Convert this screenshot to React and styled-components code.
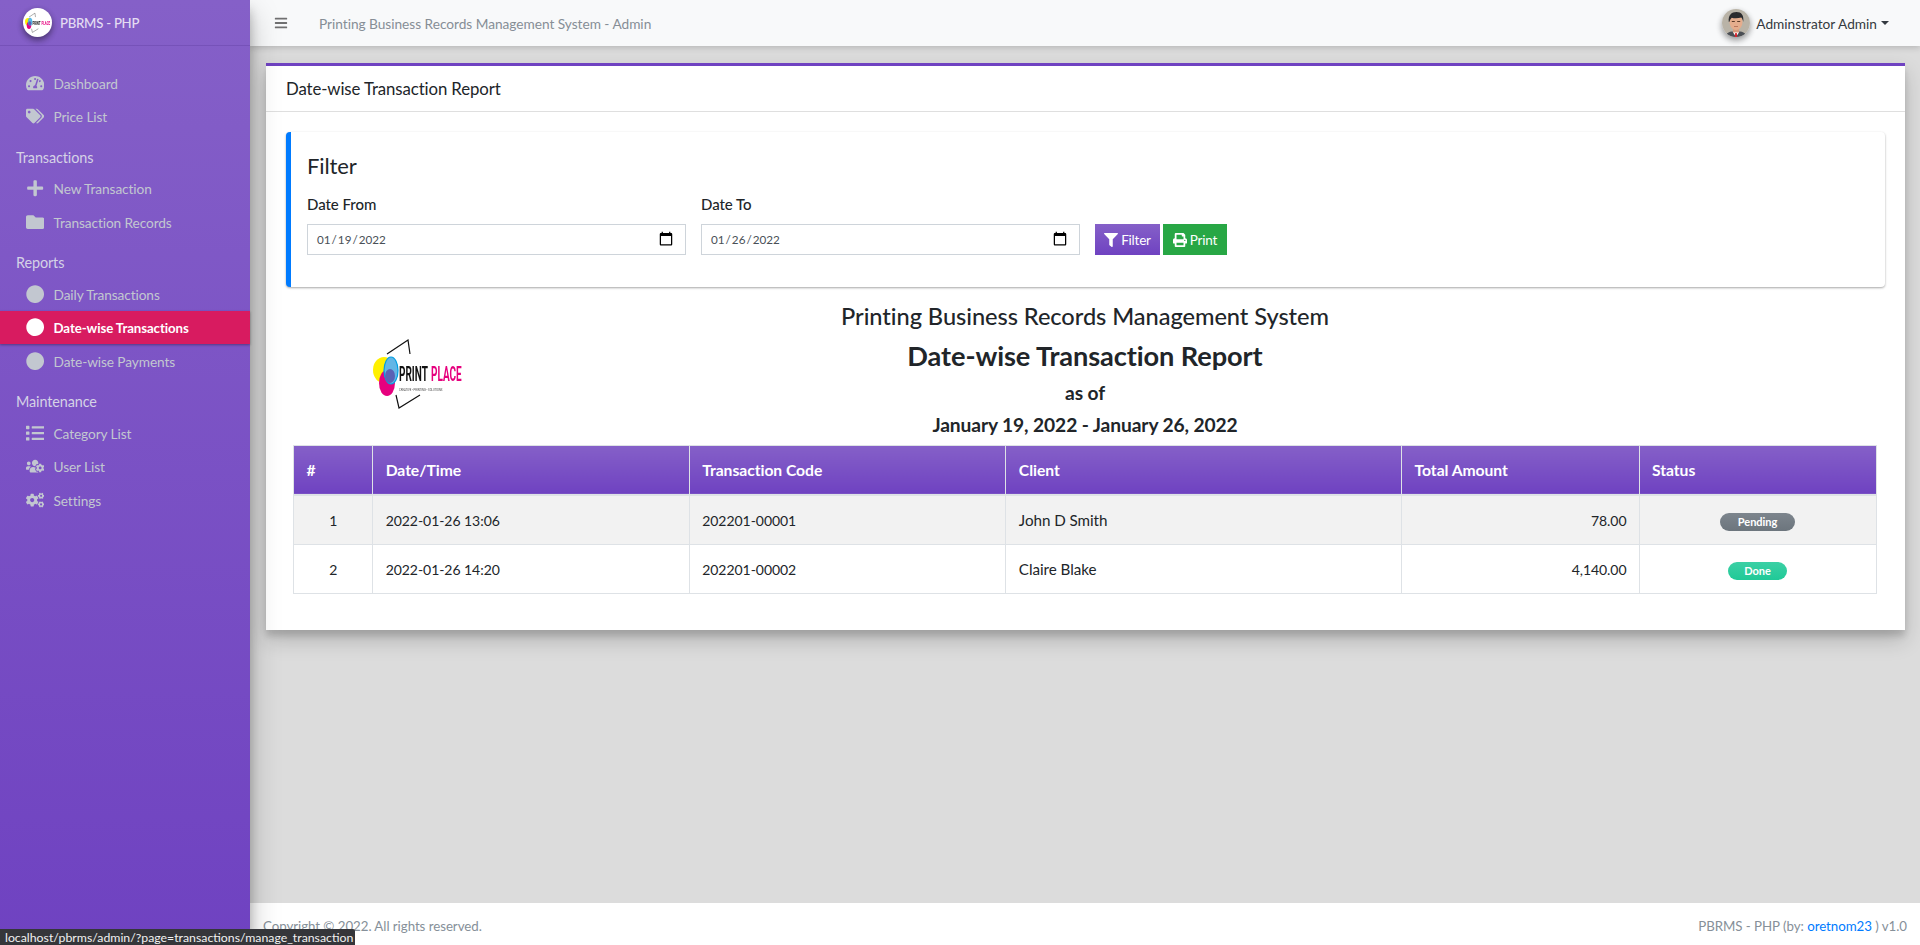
import React from "react";
import styled, { createGlobalStyle, css } from "styled-components";
import { FaBars, FaTachometerAlt, FaTags, FaPlus, FaFolder, FaCircle, FaList, FaUsersCog, FaCogs, FaFilter, FaPrint } from "react-icons/fa";

const Global = createGlobalStyle`
  html, body { margin: 0; padding: 0; height: 100%; overflow: hidden; }
  body { font-family: "Lato", "Noto Sans", sans-serif; color: #212529; background: #dcdcdc; }
  #root { height: 100%; }
  * { box-sizing: border-box; }
`;
const purple = css`background: linear-gradient(180deg, #8560c8, #6f42c1);`;

const Shell = styled.div`display: flex; height: 945px; position: relative; overflow: hidden;`;
const Sidebar = styled.aside`
  width: 250px; flex: none; position: relative; z-index: 3; ${purple}
  box-shadow: 0 14px 28px rgba(0,0,0,.25), 0 10px 10px rgba(0,0,0,.22);
`;
const Brand = styled.div`
  height: 46px; display: flex; align-items: center; gap: 8px; padding-left: 23px;
  border-bottom: 1px solid rgba(75,45,140,.25);
`;
const BrandBadge = styled.div`
  width: 29px; height: 29px; border-radius: 50%; background: #fff; overflow: hidden; display: flex;
  align-items: center; justify-content: center; flex: none;
  box-shadow: 0 3px 6px rgba(0,0,0,.3), 0 3px 6px rgba(0,0,0,.2);
  svg { flex: none; }
`;
const BrandName = styled.span`font-size: 13.2px; font-weight: 500; letter-spacing: -.25px; color: rgba(255,255,255,.8);`;
const Nav = styled.nav`padding-top: 20px; display: flex; flex-direction: column;`;
const NavItem = styled.a`
  height: 33.5px; display: flex; align-items: center; letter-spacing: -.1px; padding: .5px 0 0 23px;
  font-size: ${p => (p.$active ? "13.3px" : "13.7px")};
  color: ${p => (p.$active ? "#fff" : "#c2c7d0")};
  background: ${p => (p.$active ? "#d81b60" : "transparent")};
  font-weight: ${p => (p.$active ? 700 : 400)};
  box-shadow: ${p => (p.$active ? "0 1px 3px rgba(0,0,0,.12), 0 1px 2px rgba(0,0,0,.24)" : "none")};
`;
const NavIcon = styled.span`
  width: 24px; margin-right: 6.5px; display: flex; justify-content: center; flex: none;
  color: ${p => (p.$active ? "#fff" : "#c2c7d0")};
  svg { height: 18.3px; width: auto; flex: none; }
`;
const NavHeader = styled.div`
  height: 38.5px; display: flex; align-items: flex-end; padding: 0 0 4px 16px; font-size: 14.4px; line-height: 21px;
  letter-spacing: -.1px; color: #d5d2e6;
`;

const Main = styled.div`flex: 1; min-width: 0; display: flex; flex-direction: column;`;
const Topbar = styled.header`
  height: 46px; flex: none; background: #f8f9fa; display: flex; align-items: center; padding-left: 24px;
  position: relative; z-index: 2; box-shadow: 0 2px 6px rgba(0,0,0,.16);
`;
const MenuIcon = styled.span`display: flex; color: rgba(0,0,0,.55); width: 45px; svg { height: 14px; width: auto; }`;
const TopTitle = styled.span`color: #868e96; font-size: 13.7px; letter-spacing: -.03px;`;
const UserMenu = styled.div`margin-left: auto; margin-right: 31px; display: flex; align-items: center; gap: 6px; color: #343a40; font-size: 13.7px;`;
const Avatar = styled.div`
  width: 28px; height: 28px; border-radius: 50%; overflow: hidden; flex: none;
  box-shadow: 0 3px 6px rgba(0,0,0,.25), 0 3px 6px rgba(0,0,0,.2);
`;
const Caret = styled.span`
  width: 0; height: 0; border-left: 4px solid transparent; border-right: 4px solid transparent;
  border-top: 4.5px solid #343a40; margin-left: -2px;
`;
const Content = styled.main`flex: 1; padding: 17px 15px 0 16px; min-height: 0; background: #dcdcdc;`;
const Card = styled.section`
  background: #fff; border-top: 3px solid #6f42c1; height: 567px;
  box-shadow: 0 10px 20px rgba(0,0,0,.19), 0 6px 6px rgba(0,0,0,.13);
`;
const CardHeader = styled.div`
  height: 46px; display: flex; align-items: center; padding-left: 20px; border-bottom: 1px solid rgba(0,0,0,.125);
`;
const CardTitle = styled.h3`margin: 0; font-size: 16.8px; font-weight: 400; letter-spacing: -.1px; color: #212529;`;
const CardBody = styled.div`padding: 20px;`;
const Callout = styled.div`
  height: 155px; border-left: 5px solid #007bff; border-radius: 4px; background: #fff; padding: 19px 16px;
  box-shadow: 0 1px 3px rgba(0,0,0,.12), 0 1px 2px rgba(0,0,0,.24);
`;
const CalloutTitle = styled.h4`margin: 0 0 14px; font-size: 22px; line-height: 29px; font-weight: 400; letter-spacing: -.1px;`;
const FilterRow = styled.div`display: flex; gap: 15px; align-items: flex-end;`;
const Field = styled.label`display: flex; flex-direction: column; width: 379px; gap: 9px;`;
const FieldLabel = styled.span`font-size: 15px; line-height: 21px; font-weight: 500; letter-spacing: -.05px; color: #212529;`;
const DateInput = styled.input`
  height: 31px; width: 100%; border: 1px solid #ced4da; padding: 0 11px 1px 8px; background: #fff; color: #495057;
  font: 400 11.7px "Lato", sans-serif; border-radius: 0; outline: none;
  &::-webkit-calendar-picker-indicator { width: 16px; height: 16px; padding: 0; margin: 0; }
`;
const ButtonGroup = styled.div`display: flex; gap: 3px;`;
const Btn = styled.button`
  height: 31px; width: ${p => p.$w}px; border: 0; padding: 0; color: #fff; display: flex; align-items: center;
  justify-content: center; gap: 3px; font: 400 13.5px "Lato", sans-serif; letter-spacing: -.2px;
  ${p => (p.$kind === "print" ? css`background: #28a745;` : purple)}
  svg { font-size: 14px; }
`;
const Report = styled.div`padding: 14.5px 8px 0 7px;`;
const ReportHead = styled.div`display: grid; grid-template-columns: 2fr 8fr 2fr;`;
const LogoCell = styled.div`display: flex; justify-content: center; padding: 19px 10px 0 0;`;
const LogoPic = styled.svg`display: block; filter: blur(.25px);`;
const HeadText = styled.div`text-align: center; color: #212529;`;
const H4 = styled.h4`margin: 0 0 8px; font-size: 23.6px; line-height: 29px; font-weight: 500; letter-spacing: -.05px;`;
const H3 = styled.h3`margin: 0 0 8px; font-size: 27.2px; line-height: 34px; font-weight: 700; letter-spacing: -.1px;`;
const H5 = styled.h5`margin: 0 0 8px; font-size: 19.2px; line-height: 24px; font-weight: 700; letter-spacing: -.1px;`;

const Table = styled.table`width: 100%; border-collapse: collapse; table-layout: fixed; font-size: 14px; color: #212529;`;
const Th = styled.th`
  ${purple} height: 50px; color: #fff; text-align: left; padding: 1px 12px 0 12.5px; font-size: 15.7px; font-weight: 700;
  letter-spacing: -.05px; border: 1px solid #dee2e6; border-bottom: 2px solid #dee2e6;
`;
const Row = styled.tr`background: ${p => (p.$odd ? "#f2f2f2" : "#fff")};`;
const Td = styled.td`
  height: 49px; padding: 1px 12px 0 12.5px; border: 1px solid #dee2e6; text-align: ${p => p.$align || "left"};
  font-size: ${p => (p.$name ? "15.2px" : "14px")}; letter-spacing: -.05px;
`;
const Badge = styled.span`
  display: inline-block; min-width: ${p => p.$w}px; height: 18px; border-radius: 10px; text-align: center; color: #fff;
  font-size: 11px; font-weight: 700; line-height: 18px; margin: 3px 1px 0 0;
  background: ${p => (p.$done ? "linear-gradient(180deg,#3bd0a5,#20c997)" : "linear-gradient(180deg,#7d858d,#6c757d)")};
`;

const Footer = styled.footer`
  height: 42px; flex: none; background: #fff; display: flex; align-items: center; justify-content: space-between;
  padding: 4px 13px 0; font-size: 13.3px; color: #869099; letter-spacing: -.05px;
`;
const FooterLink = styled.a`color: #007bff; text-decoration: none;`;
const StatusTip = styled.div`
  position: absolute; left: 0; bottom: 0; height: 16px; width: 355px; background: #35363a; color: #f1f1f1; z-index: 5;
  font: 400 12.3px/17px "Lato", sans-serif; padding-left: 5px; white-space: nowrap; border-top-right-radius: 2px;
`;

const Logo = ({ width, height, viewBox = "0 0 160 100", mini }) => (
  <LogoPic width={width} height={height} viewBox={viewBox}>
    <ellipse cx="44" cy="49" rx="11" ry="13" fill="#fff000" />
    <ellipse cx="47" cy="62" rx="8" ry="13" fill="#e6007e" />
    <ellipse cx="51" cy="49.5" rx="7" ry="13.5" fill="#63b6e6" stroke="#009fe3" strokeWidth="1.2" />
    <ellipse cx="50" cy="55" rx="5" ry="7" fill="#5a62b5" />
    <polyline points="47,33 68,19 70,33" fill="none" stroke="#111" strokeWidth="1.2" />
    <polyline points="56,74 59,87 80,74" fill="none" stroke="#111" strokeWidth="1.2" />
    <g transform="translate(59 60) scale(.5 1)">
      <text fontFamily="Roboto, sans-serif" fontWeight="700" fontSize="20" fill="#111">PRINT</text>
    </g>
    <g transform="translate(91 60) scale(.5 1)">
      <text fontFamily="Roboto, sans-serif" fontWeight="700" fontSize="20" fill="#e6007e">PLACE</text>
    </g>
    {!mini && (
      <g transform="translate(59 70) scale(.62 1)">
        <text fontFamily="Roboto, sans-serif" fontSize="4.4" fill="#444">CREATIVE • PRINTING • SOLUTIONS</text>
      </g>
    )}
  </LogoPic>
);

const Face = () => (
  <svg width="28" height="28" viewBox="0 0 28 28" style={{ display: "block" }}>
    <rect width="28" height="28" fill="#b9b3a7" />
    <path d="M3 28c1-4 5-6 11-6s10 2 11 6z" fill="#4b4f55" />
    <path d="M10.5 22.5 14 28l3.5-5.5z" fill="#fff" />
    <path d="M13.2 24h1.6l.4 4h-2.4z" fill="#d9232e" />
    <rect x="11" y="18" width="6" height="5.5" fill="#d69a7c" />
    <ellipse cx="14" cy="13" rx="6.5" ry="8" fill="#e5ad8d" />
    <path d="M6.8 13C6 6 9.500 3 14.500 3s7.500 3 6.800 10c-.5-2-1-3.500-2-4.500-3 1-7.500 1-9.500.2-1 1-2 2.300-2.500 4.300z" fill="#2b2b2d" />
    <rect x="9.8" y="12" width="3" height="1" fill="#5b3a28" />
    <rect x="15.2" y="12" width="3" height="1" fill="#5b3a28" />
    <path d="M12 17.5h4" stroke="#a8604a" strokeWidth=".7" />
  </svg>
);

const Item = ({ icon: I, children, active }) => (
  <NavItem $active={active}>
    <NavIcon $active={active}><I /></NavIcon>
    {children}
  </NavItem>
);

const rows = [
  ["1", "2022-01-26 13:06", "202201-00001", "John D Smith", "78.00", "Pending"],
  ["2", "2022-01-26 14:20", "202201-00002", "Claire Blake", "4,140.00", "Done"],
];

export default function App() {
  return (
    <Shell>
      <Global />
      <Sidebar>
        <Brand>
          <BrandBadge><Logo width={27} height={21} viewBox="30 15 94 74" mini /></BrandBadge>
          <BrandName>PBRMS - PHP</BrandName>
        </Brand>
        <Nav>
          <Item icon={FaTachometerAlt}>Dashboard</Item>
          <Item icon={FaTags}>Price List</Item>
          <NavHeader>Transactions</NavHeader>
          <Item icon={FaPlus}>New Transaction</Item>
          <Item icon={FaFolder}>Transaction Records</Item>
          <NavHeader>Reports</NavHeader>
          <Item icon={FaCircle}>Daily Transactions</Item>
          <Item icon={FaCircle} active>Date-wise Transactions</Item>
          <Item icon={FaCircle}>Date-wise Payments</Item>
          <NavHeader>Maintenance</NavHeader>
          <Item icon={FaList}>Category List</Item>
          <Item icon={FaUsersCog}>User List</Item>
          <Item icon={FaCogs}>Settings</Item>
        </Nav>
      </Sidebar>
      <Main>
        <Topbar>
          <MenuIcon><FaBars /></MenuIcon>
          <TopTitle>Printing Business Records Management System - Admin</TopTitle>
          <UserMenu>
            <Avatar><Face /></Avatar>
            <span>Adminstrator Admin</span>
            <Caret />
          </UserMenu>
        </Topbar>
        <Content>
          <Card>
            <CardHeader><CardTitle>Date-wise Transaction Report</CardTitle></CardHeader>
            <CardBody>
              <Callout>
                <CalloutTitle>Filter</CalloutTitle>
                <FilterRow>
                  <Field>
                    <FieldLabel>Date From</FieldLabel>
                    <DateInput type="date" defaultValue="2022-01-19" />
                  </Field>
                  <Field>
                    <FieldLabel>Date To</FieldLabel>
                    <DateInput type="date" defaultValue="2022-01-26" />
                  </Field>
                  <ButtonGroup>
                    <Btn $w={65}><FaFilter />Filter</Btn>
                    <Btn $w={64} $kind="print"><FaPrint />Print</Btn>
                  </ButtonGroup>
                </FilterRow>
              </Callout>
              <Report>
                <ReportHead>
                  <LogoCell><Logo width={160} height={100} /></LogoCell>
                  <HeadText>
                    <H4>Printing Business Records Management System</H4>
                    <H3>Date-wise Transaction Report</H3>
                    <H5>as of</H5>
                    <H5>January 19, 2022 - January 26, 2022</H5>
                  </HeadText>
                  <div />
                </ReportHead>
                <Table>
                  <colgroup>
                    <col style={{ width: "5%" }} />
                    <col style={{ width: "20%" }} />
                    <col style={{ width: "20%" }} />
                    <col style={{ width: "25%" }} />
                    <col style={{ width: "15%" }} />
                    <col style={{ width: "15%" }} />
                  </colgroup>
                  <thead>
                    <tr>
                      <Th>#</Th><Th>Date/Time</Th><Th>Transaction Code</Th><Th>Client</Th><Th>Total Amount</Th><Th>Status</Th>
                    </tr>
                  </thead>
                  <tbody>
                    {rows.map((r, i) => (
                      <Row key={r[0]} $odd={i === 0}>
                        <Td $align="center">{r[0]}</Td>
                        <Td>{r[1]}</Td>
                        <Td>{r[2]}</Td>
                        <Td $name>{r[3]}</Td>
                        <Td $align="right">{r[4]}</Td>
                        <Td $align="center"><Badge $done={r[5] === "Done"} $w={r[5] === "Done" ? 59 : 75}>{r[5]}</Badge></Td>
                      </Row>
                    ))}
                  </tbody>
                </Table>
              </Report>
            </CardBody>
          </Card>
        </Content>
        <Footer>
          <span>Copyright © 2022. All rights reserved.</span>
          <span>PBRMS - PHP (by: <FooterLink href="#">oretnom23</FooterLink> ) v1.0</span>
        </Footer>
      </Main>
      <StatusTip>localhost/pbrms/admin/?page=transactions/manage_transaction</StatusTip>
    </Shell>
  );
}
